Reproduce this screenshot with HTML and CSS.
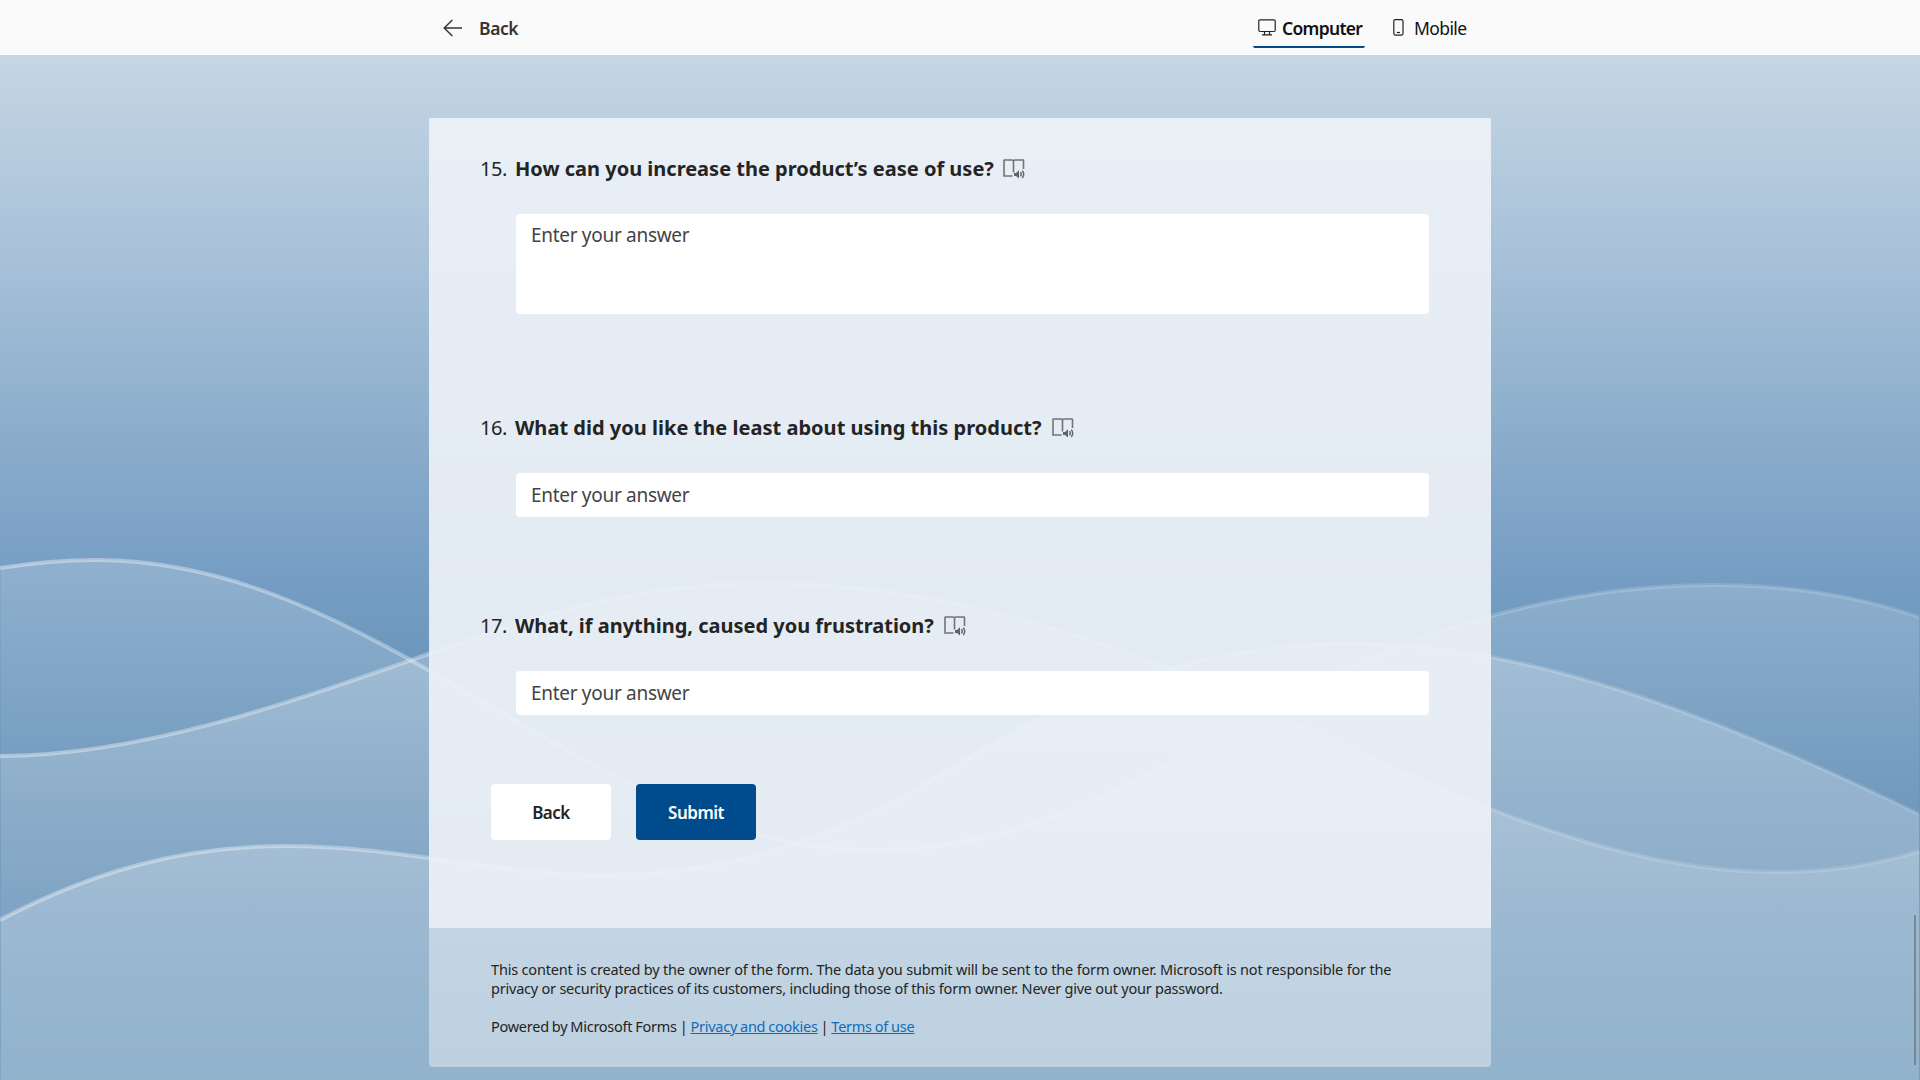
FILE: index.html
```html
<!DOCTYPE html>
<html lang="en">
<head>
<meta charset="utf-8">
<title>Form preview</title>
<link rel="stylesheet" href="styles.css">
</head>
<body>
<svg class="backdrop" viewBox="0 0 1920 1080" preserveAspectRatio="none" aria-hidden="true">
  <defs>
    <linearGradient id="sky" gradientUnits="userSpaceOnUse" x1="0" y1="0" x2="0" y2="1080">
      <stop offset=".051" stop-color="#c5d6e4"/>
      <stop offset=".13" stop-color="#b8cddf"/>
      <stop offset=".228" stop-color="#a9c2d9"/>
      <stop offset=".37" stop-color="#90b1ce"/>
      <stop offset=".463" stop-color="#82a6c8"/>
      <stop offset=".52" stop-color="#789fc5"/>
      <stop offset=".6" stop-color="#6d98be"/>
      <stop offset=".74" stop-color="#6893b9"/>
      <stop offset="1" stop-color="#6896b9"/>
    </linearGradient>
    <linearGradient id="fillA" gradientUnits="userSpaceOnUse" x1="0" y1="560" x2="0" y2="900">
      <stop offset="0" stop-color="#fff" stop-opacity=".18"/>
      <stop offset=".27" stop-color="#fff" stop-opacity=".16"/>
      <stop offset="1" stop-color="#fff" stop-opacity="0"/>
    </linearGradient>
    <linearGradient id="fillB" gradientUnits="userSpaceOnUse" x1="0" y1="583" x2="0" y2="1080">
      <stop offset="0" stop-color="#fff" stop-opacity=".25"/>
      <stop offset="1" stop-color="#fff" stop-opacity=".11"/>
    </linearGradient>
    <linearGradient id="fillC" gradientUnits="userSpaceOnUse" x1="0" y1="643" x2="0" y2="1080">
      <stop offset="0" stop-color="#fff" stop-opacity=".25"/>
      <stop offset=".5" stop-color="#fff" stop-opacity=".24"/>
      <stop offset="1" stop-color="#fff" stop-opacity=".18"/>
    </linearGradient>
    <linearGradient id="line" gradientUnits="userSpaceOnUse" x1="0" y1="0" x2="1920" y2="0">
      <stop offset="0" stop-color="#fff" stop-opacity=".38"/>
      <stop offset=".22" stop-color="#fff" stop-opacity=".32"/>
      <stop offset="1" stop-color="#fff" stop-opacity=".12"/>
    </linearGradient>
    <path id="curveA" d="M0,568C32,563 62,560 96,560C230,560 345,620 480,700C620,783 740,850 872,850C990,850 1090,811 1200,745C1320,673 1500,585 1714,585C1790,585 1855,595 1919,617"/>
    <path id="curveB" d="M0,756C140,756 290,703 440,650C545,611 650,583 760,583C930,583 1085,628 1260,707C1430,784 1600,872 1776,872C1825,872 1873,866 1919,851"/>
    <path id="curveC" d="M0,920C95,870 185,846 286,846C400,846 495,875 605,875C735,875 845,834 960,763C1075,692 1200,643 1353,643C1520,643 1710,712 1919,814"/>
  </defs>
  <rect width="1920" height="1080" fill="url(#sky)"/>
  <path fill="url(#fillA)" d="M.5,568C32,563 62,560 96,560C230,560 345,620 480,700C620,783 740,850 872,850C990,850 1090,811 1200,745C1320,673 1500,585 1714,585C1790,585 1855,595 1919.300,617V1080H.5Z"/>
  <path fill="url(#fillB)" d="M.5,756C140,756 290,703 440,650C545,611 650,583 760,583C930,583 1085,628 1260,707C1430,784 1600,872 1776,872C1825,872 1873,866 1919.300,851V1080H.5Z"/>
  <path fill="url(#fillC)" d="M.5,920C95,870 185,846 286,846C400,846 495,875 605,875C735,875 845,834 960,763C1075,692 1200,643 1353,643C1520,643 1710,712 1919.300,814V1080H.5Z"/>
  <g class="lines">
    <use href="#curveA"/>
    <use href="#curveB"/>
    <use href="#curveC"/>
  </g>
</svg>

<svg class="symbols" aria-hidden="true">
  <symbol id="reader" viewBox="0 0 22 20">
    <path d="M9.500 17H1V1.500Q1 1 1.500 1H9Q10.500 1 10.500 2.500V13.500M10.500 2.500Q10.500 1 12 1H20Q20.500 1 20.500 1.500V10" fill="none" stroke="#707478" stroke-width="1.600"/>
    <path d="M11 14h2l3-2.800v8.200L13 16.900h-2z" fill="#606468"/>
    <path d="M17.500 13.200q1.400 2.100 0 4.200M19.300 11.600q2.800 3.700 0 7.400" fill="none" stroke="#606468" stroke-width="1.500"/>
  </symbol>
</svg>

<div class="page">
  <header class="topbar">
    <a class="back-link">
      <svg width="20" height="18" viewBox="0 0 20 18"><path d="M9.300 1L1.200 9l8.100 8M1.200 9H19" fill="none" stroke="#333" stroke-width="1.400"/></svg>
      <span class="back-label">Back</span>
    </a>
    <nav class="modes">
      <a class="mode active">
        <svg width="18" height="17" viewBox="0 0 18 17"><path d="M2 .9H16Q17.200 .9 17.200 2.100V11.300Q17.200 12.500 16 12.500H2Q.8 12.500 .8 11.300V2.100Q.8 .9 2 .9ZM6.500 12.500V15.700M11.500 12.500V15.700M4 15.800H14" fill="none" stroke="#222" stroke-width="1.200"/></svg>
        <span class="mode-label computer">Computer</span>
      </a>
      <a class="mode">
        <svg width="11" height="17" viewBox="0 0 11 17"><rect x=".8" y=".7" width="9.200" height="15.400" rx="1.500" fill="none" stroke="#222" stroke-width="1.200"/><path d="M3.800 13.500H7" stroke="#222" stroke-width="1.200"/></svg>
        <span class="mode-label mobile">Mobile</span>
      </a>
    </nav>
  </header>

  <main class="form">
    <section class="questions">
      <article class="question q15">
        <h2 class="title"><span class="number">15.</span><span class="text t15">How can you increase the product’s ease of use?</span><svg class="reader" width="22" height="20"><use href="#reader"/></svg></h2>
        <div class="field tall">Enter your answer</div>
      </article>
      <article class="question q16">
        <h2 class="title"><span class="number">16.</span><span class="text t16">What did you like the least about using this product?</span><svg class="reader" width="22" height="20"><use href="#reader"/></svg></h2>
        <div class="field">Enter your answer</div>
      </article>
      <article class="question q17">
        <h2 class="title"><span class="number">17.</span><span class="text t17">What, if anything, caused you frustration?</span><svg class="reader" width="22" height="20"><use href="#reader"/></svg></h2>
        <div class="field">Enter your answer</div>
      </article>
      <div class="actions">
        <button class="btn">Back</button>
        <button class="btn primary">Submit</button>
      </div>
    </section>
    <footer class="legal">
      <p class="l1">This content is created by the owner of the form. The data you submit will be sent to the form owner. Microsoft is not responsible for the</p>
      <p class="l2">privacy or security practices of its customers, including those of this form owner. Never give out your password.</p>
      <p class="l3">Powered by Microsoft Forms | <a>Privacy and cookies</a> | <a>Terms of use</a></p>
    </footer>
  </main>
</div>
<div class="scroll-thumb"></div>
</body>
</html>
```
FILE: styles.css
```css
* { box-sizing: border-box; }

body {
  margin: 0;
  height: 1080px;
  overflow: hidden;
  font-family: "Noto Sans", "Open Sans", sans-serif;
  color: #242424;
}

.backdrop {
  position: absolute;
  inset: 0;
  width: 1920px;
  height: 1080px;
}

.lines {
  fill: none;
  stroke: url(#line);
  stroke-width: 4;
}

.symbols { position: absolute; width: 0; height: 0; }

.page { position: relative; }

.topbar {
  height: 55px;
  background: #fafafa;
  padding: 0 446px 0 443px;
  display: flex;
  justify-content: space-between;
}

.back-link {
  display: flex;
  align-items: center;
  gap: 16px;
  color: #333;
}

.back-label {
  font-size: 17.5px;
  font-weight: 600;
  line-height: 24px;
  letter-spacing: -0.4px;
  padding-top: 1px;
}

.modes { display: flex; gap: 23px; }

.mode {
  display: flex;
  align-items: center;
  height: 48px;
  padding: 9px 5px 0;
  gap: 6px;
  color: #111;
  border-bottom: 2px solid transparent;
  border-radius: 2px;
}

.mode svg { flex: none; }

.mode.active { border-bottom-color: #004b8b; width: 112px; }

.mode-label {
  font-size: 17.5px;
  line-height: 24px;
  white-space: nowrap;
}

.computer { font-weight: 600; letter-spacing: -0.7px; }
.mobile { letter-spacing: -0.6px; width: 55px; margin-left: 4px; }

.form { width: 1062px; margin: 63px 0 0 429px; }

.questions {
  height: 810px;
  background: rgba(237, 242, 247, 0.91);
  padding: 37px 62px 0 51px;
}

.title {
  margin: 0 0 31px;
  height: 28px;
  display: flex;
  align-items: center;
  font-size: 20px;
  line-height: 28px;
  white-space: nowrap;
}

.number {
  width: 35px;
  font-weight: 400;
  letter-spacing: -0.4px;
}

.text { font-weight: 700; }
.t15 { width: 488px; letter-spacing: 0; }
.t16 { width: 537px; letter-spacing: 0.02px; }
.t17 { width: 429px; letter-spacing: -0.01px; }

.field {
  height: 44px;
  margin-left: 36px;
  padding: 8px 15px;
  background: #fff;
  border-radius: 4px;
  color: #444;
  font-size: 19px;
  line-height: 28px;
  letter-spacing: -0.3px;
}

.field.tall { height: 100px; padding-top: 7px; }

.q15 { margin-bottom: 100px; }
.q16 { margin-bottom: 95px; }

.actions { display: flex; gap: 25px; padding: 69px 0 0 11px; }

.btn {
  width: 120px;
  height: 56px;
  padding: 1px 0 0;
  border: 0;
  border-radius: 4px;
  background: #fff;
  color: #242424;
  font: 600 17px/24px "Noto Sans", "Open Sans", sans-serif;
  letter-spacing: -0.5px;
}

.btn.primary { background: #004b8b; color: #fff; }

.legal {
  height: 139px;
  padding: 32px 62px 0;
  background: rgba(255, 255, 255, 0.4);
  border-radius: 0 0 4px 4px;
  font-size: 14.5px;
  line-height: 19px;
}

.legal p { margin: 0; white-space: nowrap; }
.legal .l1 { letter-spacing: -0.18px; }
.legal .l2 { letter-spacing: -0.22px; }
.legal .l3 { margin-top: 19px; letter-spacing: -0.26px; word-spacing: -0.5px; }
.legal a { color: #0f6cbd; text-decoration: underline; }

.scroll-thumb {
  position: absolute;
  left: 1914px;
  top: 915px;
  width: 2px;
  height: 150px;
  background: #7c868e;
}
```
